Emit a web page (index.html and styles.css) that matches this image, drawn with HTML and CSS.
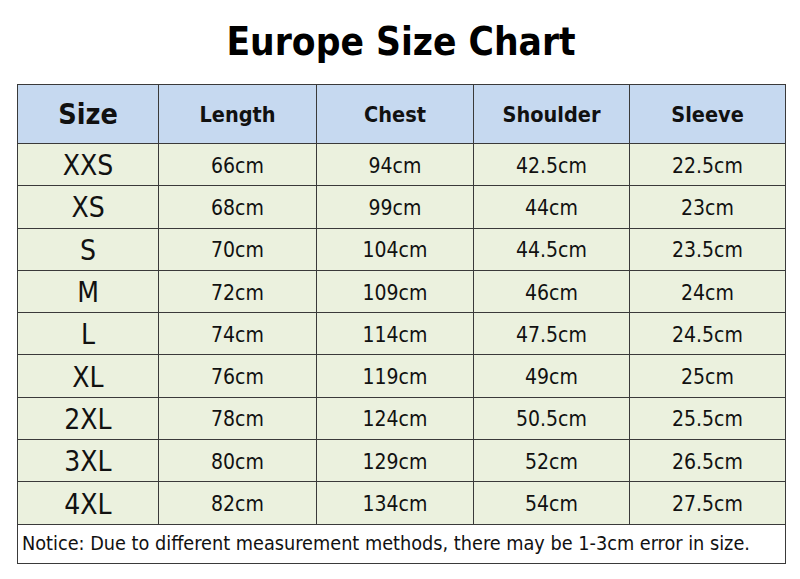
FILE: index.html
```html
<!DOCTYPE html>
<html>
<head>
<meta charset="utf-8">
<link rel="stylesheet" href="styles.css">
</head>
<body>
<div class="page">
  <h1 class="title">Europe Size Chart</h1>
  <table class="chart">
    <colgroup>
      <col class="c1"><col class="c2"><col class="c3"><col class="c4"><col class="c5">
    </colgroup>
    <thead>
      <tr class="head">
        <th class="size-h">Size</th><th>Length</th><th>Chest</th><th>Shoulder</th><th>Sleeve</th>
      </tr>
    </thead>
    <tbody>
      <tr><td class="sz">XXS</td><td>66cm</td><td>94cm</td><td>42.5cm</td><td>22.5cm</td></tr>
      <tr><td class="sz">XS</td><td>68cm</td><td>99cm</td><td>44cm</td><td>23cm</td></tr>
      <tr><td class="sz">S</td><td>70cm</td><td>104cm</td><td>44.5cm</td><td>23.5cm</td></tr>
      <tr><td class="sz">M</td><td>72cm</td><td>109cm</td><td>46cm</td><td>24cm</td></tr>
      <tr><td class="sz">L</td><td>74cm</td><td>114cm</td><td>47.5cm</td><td>24.5cm</td></tr>
      <tr><td class="sz">XL</td><td>76cm</td><td>119cm</td><td>49cm</td><td>25cm</td></tr>
      <tr><td class="sz">2XL</td><td>78cm</td><td>124cm</td><td>50.5cm</td><td>25.5cm</td></tr>
      <tr><td class="sz">3XL</td><td>80cm</td><td>129cm</td><td>52cm</td><td>26.5cm</td></tr>
      <tr><td class="sz">4XL</td><td>82cm</td><td>134cm</td><td>54cm</td><td>27.5cm</td></tr>
      <tr class="note"><td colspan="5">Notice: Due to different measurement methods, there may be 1-3cm error in size.</td></tr>
    </tbody>
  </table>
</div>
</body>
</html>
```
FILE: styles.css
```css
html, body {
  margin: 0;
  padding: 0;
  background: #ffffff;
}
body {
  font-family: "DejaVu Sans Condensed", "DejaVu Sans", sans-serif;
  color: #111111;
}
.page {
  width: 800px;
  height: 579px;
  padding: 0 0 0 17px;
  box-sizing: border-box;
}
.title {
  margin: 0;
  height: 84px;
  line-height: 84px;
  width: 768px;
  text-align: center;
  font-size: 38.5px;
  font-weight: bold;
  color: #000000;
}
.chart {
  border-collapse: collapse;
  width: 768px;
  table-layout: fixed;
}
.c1 { width: 141px; }
.c2 { width: 158px; }
.c3 { width: 157px; }
.c4 { width: 156px; }
.c5 { width: 156px; }
.chart th, .chart td {
  border: 1.5px solid #3a3a3a;
  text-align: center;
  padding: 0;
}
.head th {
  background: #c6d9f0;
  height: 58px;
  font-size: 21.5px;
  font-weight: bold;
}
.head th.size-h {
  font-size: 28.5px;
}
.chart tbody td {
  background: #ebf1de;
  height: 39.3px;
  padding-top: 2px;
  font-size: 21px;
}
.chart tbody td.sz {
  font-size: 28px;
}
.chart tbody tr.note td {
  background: #ffffff;
  height: 38px;
  padding-top: 0;
  text-align: left;
  padding-left: 4px;
  font-size: 19.7px;
}
```
